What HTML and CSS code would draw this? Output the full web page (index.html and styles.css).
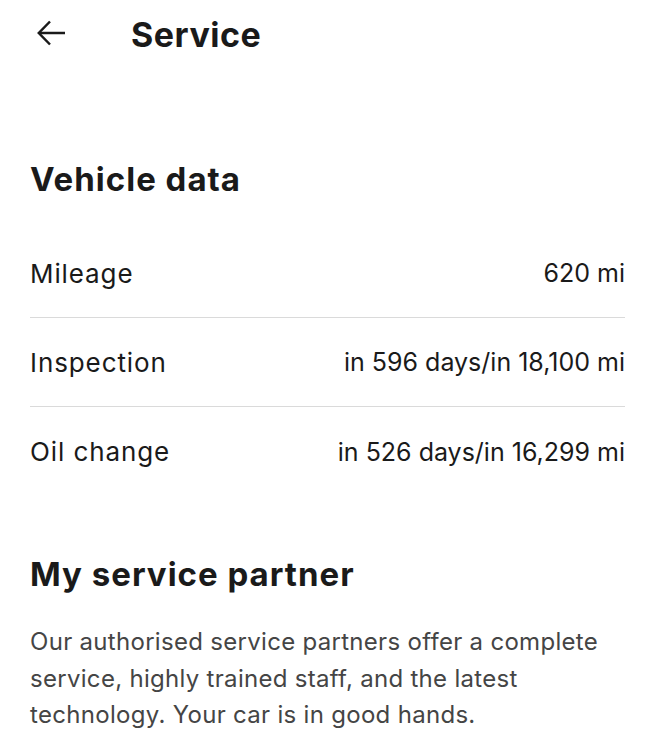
FILE: index.html
```html
<!DOCTYPE html>
<html lang="en">
<head>
<meta charset="utf-8">
<title>Service</title>
<link rel="stylesheet" href="styles.css">
</head>
<body>
<div class="page">
  <header class="topbar">
    <button class="back" aria-label="Back">
      <svg width="28" height="26" viewBox="0 0 28 26" fill="none" stroke="#1a1a1a" stroke-width="2.5" stroke-linecap="butt" stroke-linejoin="miter">
        <path d="M28 13H2"/>
        <path d="M13 1.5L1.8 13L13 24.5"/>
      </svg>
    </button>
    <h1 class="title">Service</h1>
  </header>

  <section class="section vehicle">
    <h2 class="heading">Vehicle data</h2>
    <ul class="rows">
      <li class="row"><span class="label">Mileage</span><span class="value">620 mi</span></li>
      <li class="row"><span class="label">Inspection</span><span class="value">in 596 days/in 18,100 mi</span></li>
      <li class="row"><span class="label">Oil change</span><span class="value">in 526 days/in 16,299 mi</span></li>
    </ul>
  </section>

  <section class="section partner">
    <h2 class="heading">My service partner</h2>
    <p class="desc">Our authorised service partners offer a complete service, highly trained staff, and the latest technology. Your car is in good hands.</p>
  </section>
</div>
</body>
</html>
```

FILE: styles.css
```css
* { box-sizing: border-box; }
html, body { margin: 0; padding: 0; background: #fff; }
body {
  font-family: "Inter", "Noto Sans", sans-serif;
  color: #1a1a1a;
}
.page {
  width: 652px;
  padding: 0 27px 0 30px;
}
.topbar {
  display: flex;
  align-items: center;
  height: 68px;
}
.back {
  background: none;
  border: 0;
  padding: 0;
  margin: -2px 0 0 7px;
  width: 28px;
  height: 26px;
  display: flex;
}
.title {
  margin: 0 0 0 66px;
  font-size: 34px;
  line-height: normal;
  font-weight: 700;
  letter-spacing: 0.5px;
}
.vehicle { margin-top: 91px; }
.heading {
  margin: 0;
  font-size: 33px;
  font-weight: 700;
  line-height: 40px;
  letter-spacing: 1px;
}
.rows {
  list-style: none;
  margin: 30px 0 0;
  padding: 0;
}
.row {
  display: flex;
  justify-content: space-between;
  align-items: center;
  height: 89px;
  border-bottom: 1.5px solid #dadada;
}
.row:last-child { border-bottom: 0; }
.label {
  font-size: 26px;
  letter-spacing: 0.9px;
}
.value {
  font-size: 25px;
  text-align: right;
}
.partner { margin-top: 58px; }
.desc {
  margin: 30px 0 0;
  font-size: 24px;
  line-height: 36.5px;
  letter-spacing: 0.3px;
  color: #454545;
}
```
